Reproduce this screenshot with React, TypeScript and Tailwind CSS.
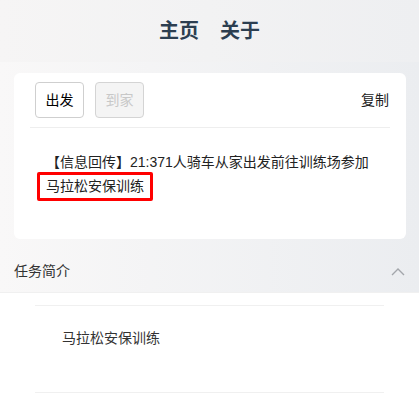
const cjk = "font-['Liberation_Sans','Noto_Sans_CJK_SC',sans-serif]";

function Chevron() {
  return (
    <svg width="14" height="9" viewBox="0 0 14 9" fill="none">
      <polyline points="1,8 7,2 13,8" stroke="#a3a6ab" strokeWidth="1.4" />
    </svg>
  );
}

export default function App() {
  return (
    <div className={`${cjk} w-[419px] h-[404px] overflow-hidden bg-gradient-to-r from-[#f9f8f8] to-[#ebedf0] text-[14px] text-[#222]`}>
      <header className="h-[62px] flex items-center justify-center gap-[21px] bg-gradient-to-r from-[#f6f5f5] to-[#eeeff1] text-[20px] font-bold text-[#2c3e50]">
        <span>主页</span>
        <span>关于</span>
      </header>

      <div className="pt-[11px] px-[13px]">
        <div className="bg-white rounded-[6px] h-[166px] ml-px px-[16px]">
          <div className="flex items-center justify-between py-[9px] border-b border-[#eeeeee]">
            <div className="flex gap-[11px] ml-[5px]">
              <button className="w-[49px] h-[36px] rounded-[4px] border border-[#cfcfcf] bg-white text-[14px] text-black">
                出发
              </button>
              <button className="w-[49px] h-[36px] rounded-[4px] border border-[#d4d4d4] bg-[#f4f4f4] text-[14px] text-[#c8c8c8]">
                到家
              </button>
            </div>
            <span className="mr-px">复制</span>
          </div>
          <div className="pt-[22px] pl-[16px] leading-[24px] text-[#222]">
            <p>【信息回传】21:371人骑车从家出发前往训练场参加</p>
            <span className="block w-fit -ml-[9px] -mt-[2px] px-[6px] border-[3px] border-[#ff0000] rounded-[2px] leading-[23px]">
              马拉松安保训练
            </span>
          </div>
        </div>
      </div>

      <div className="mt-[11px] h-[43px] flex items-center justify-between pl-[14px] pr-[14px] border-b border-[#f0f0f0] text-[#333]">
        <span>任务简介</span>
        <Chevron />
      </div>

      <div className="bg-white h-[120px] pt-[12px] px-[35px]">
        <div className="border-t border-b border-[#f0f0f0] h-[88px] pt-[20px] pl-[27px] leading-[24px] text-[#333]">
          马拉松安保训练
        </div>
      </div>
    </div>
  );
}
